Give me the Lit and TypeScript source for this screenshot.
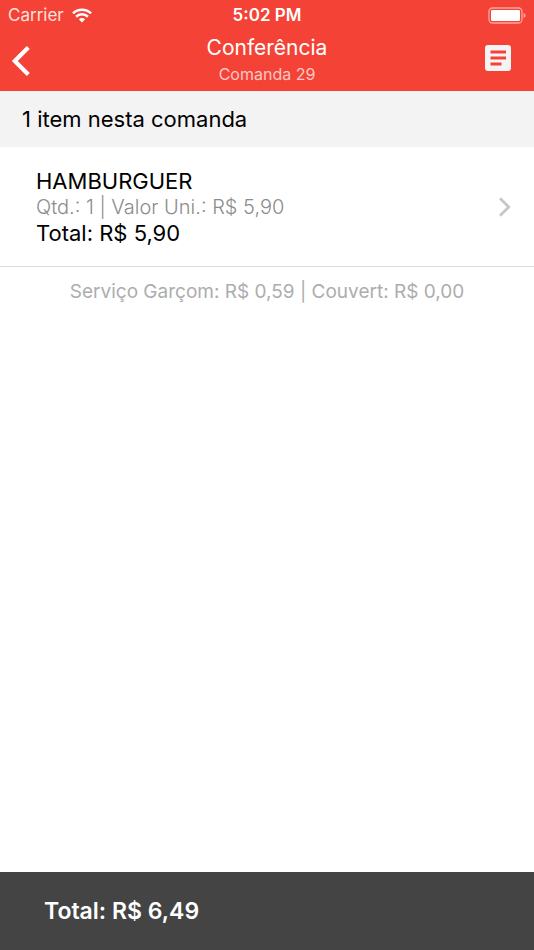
import { LitElement, html, css } from "lit";
import { customElement } from "lit/decorators.js";

const brl = (value: number) => `R$ ${value.toFixed(2).replace(".", ",")}`;

interface OrderItem {
  name: string;
  quantity: number;
  unitPrice: number;
}

@customElement("status-bar")
export class StatusBar extends LitElement {
  static styles = css`
    :host {
      display: grid;
      grid-template-columns: 1fr auto 1fr;
      align-items: center;
      height: 30px;
      padding: 0 8px;
      font-size: 17px;
      line-height: 20px;
    }
    .carrier {
      display: flex;
      align-items: center;
      gap: 8px;
      color: #fde0dd;
    }
    .time {
      font-weight: 600;
    }
    .battery {
      justify-self: end;
    }
    svg {
      display: block;
    }
  `;

  render() {
    return html`
      <div class="carrier">
        <span>Carrier</span>
        <svg width="20" height="15" viewBox="0 0 20 15" fill="none" stroke="#fff" stroke-width="2.6" aria-hidden="true">
          <path d="M1 5.4a12.8 12.8 0 0 1 18 0" />
          <path d="M4.1 8.7a8.4 8.4 0 0 1 11.8 0" />
          <path d="M10 14.4 6.9 11.3a4.4 4.4 0 0 1 6.2 0z" fill="#fff" stroke="none" />
        </svg>
      </div>
      <span class="time">5:02 PM</span>
      <svg class="battery" width="38" height="17" viewBox="0 0 38 17" aria-label="Bateria">
        <rect x="1" y="1" width="33" height="15" rx="3.5" fill="none" stroke="#fba59e" stroke-width="1.3" />
        <rect x="3" y="3" width="29" height="11" rx="1.2" fill="#fff" />
        <path d="M35.6 6v5c1.3-.4 2-1.4 2-2.5s-.7-2.1-2-2.5z" fill="#fba59e" />
      </svg>
    `;
  }
}

@customElement("nav-bar")
export class NavBar extends LitElement {
  static styles = css`
    :host {
      display: grid;
      grid-template-columns: 60px 1fr 60px;
      height: 61px;
    }
    button {
      display: flex;
      align-items: center;
      padding: 0;
      border: 0;
      background: none;
      cursor: pointer;
    }
    .back {
      padding-left: 11px;
    }
    .notes {
      justify-content: flex-end;
      padding: 0 23px 6px 0;
    }
    .titles {
      padding-top: 5px;
      text-align: center;
    }
    h1,
    p {
      margin: 0;
    }
    h1 {
      font-size: 21px;
      line-height: 26px;
      font-weight: 400;
    }
    p {
      font-size: 16px;
      line-height: 26px;
      color: #fbc9c5;
    }
  `;

  render() {
    return html`
      <button class="back" aria-label="Voltar">
        <svg width="20" height="30" viewBox="0 0 20 30" fill="none" stroke="#fff" stroke-width="4.2">
          <path d="M17.3 1.6 3.8 15 17.3 28.4" />
        </svg>
      </button>
      <div class="titles">
        <h1>Conferência</h1>
        <p>Comanda 29</p>
      </div>
      <button class="notes" aria-label="Detalhes">
        <svg width="26" height="26" viewBox="0 0 26 26">
          <rect width="26" height="26" rx="3" fill="#f4f4f4" />
          <path d="M5.5 5.500h15.500v3h-15.500zM5.500 11.500h15.500v3h-15.500zM5.500 17.400h11v3h-11z" fill="#f44336" />
        </svg>
      </button>
    `;
  }
}

@customElement("app-root")
export class AppRoot extends LitElement {
  static styles = css`
    :host {
      display: flex;
      flex-direction: column;
      min-height: 100vh;
      background: #fff;
      color: #000;
      font-family: Inter, "Liberation Sans", sans-serif;
    }
    header {
      background: #f44336;
      color: #fff;
    }
    main {
      flex: 1;
    }
    h2,
    ul,
    p {
      margin: 0;
      padding: 0;
    }
    h2 {
      padding: 15px 22px;
      background: #f3f3f3;
      font-size: 22px;
      line-height: 26px;
      font-weight: 400;
    }
    ul {
      list-style: none;
    }
    .item {
      display: flex;
      align-items: center;
      justify-content: space-between;
      width: 100%;
      padding: 21px 23px 20px 36px;
      border: 0;
      border-bottom: 1px solid #dcdcdc;
      background: none;
      color: inherit;
      font: inherit;
      font-size: 22px;
      line-height: 26px;
      text-align: left;
      cursor: pointer;
    }
    .item span {
      display: block;
    }
    .item .detail {
      font-size: 20px;
      font-weight: 300;
      color: #8c8c8c;
    }
    .fees {
      padding: 12px 16px;
      font-size: 19px;
      line-height: 26px;
      text-align: center;
      color: #adadad;
    }
    footer {
      padding: 26px 44px;
      background: #444;
      color: #fff;
      font-size: 23px;
      line-height: 26px;
      font-weight: 600;
    }
  `;

  private items: OrderItem[] = [{ name: "HAMBURGUER", quantity: 1, unitPrice: 5.9 }];
  private service = 0.59;
  private cover = 0;

  private renderItem(item: OrderItem) {
    return html`
      <li>
        <button class="item">
          <span>
            <span>${item.name}</span>
            <span class="detail">Qtd.: ${item.quantity} | Valor Uni.: ${brl(item.unitPrice)}</span>
            <span>Total: ${brl(item.quantity * item.unitPrice)}</span>
          </span>
          <svg width="13" height="20" viewBox="0 0 13 20" fill="none" stroke="#c7c7cc" stroke-width="2.8" aria-hidden="true">
            <path d="M2 1.3 10.7 10 2 18.7" />
          </svg>
        </button>
      </li>
    `;
  }

  render() {
    const subtotal = this.items.reduce((sum, item) => sum + item.quantity * item.unitPrice, 0);
    return html`
      <header>
        <status-bar></status-bar>
        <nav-bar></nav-bar>
      </header>
      <main>
        <h2>${this.items.length} item nesta comanda</h2>
        <ul>
          ${this.items.map((item) => this.renderItem(item))}
        </ul>
        <p class="fees">Serviço Garçom: ${brl(this.service)} | Couvert: ${brl(this.cover)}</p>
      </main>
      <footer>Total: ${brl(subtotal + this.service + this.cover)}</footer>
    `;
  }
}
